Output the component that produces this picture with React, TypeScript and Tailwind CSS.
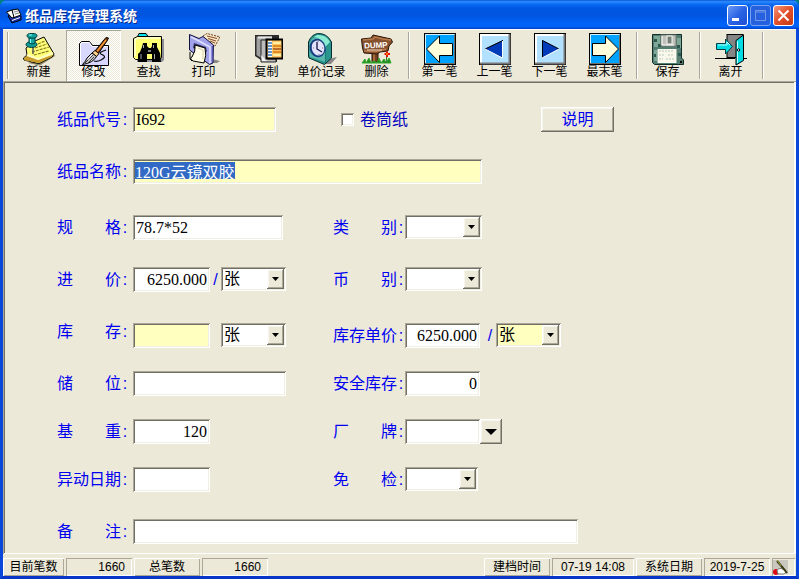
import { useEffect, useRef } from "react";
import type { ReactNode } from "react";

const sunken =
  "shadow-[inset_1px_1px_0_#aca899,inset_-1px_-1px_0_#fff,inset_2px_2px_0_#716f64,inset_-2px_-2px_0_#f1efe2]";
const raised =
  "shadow-[inset_-1px_-1px_0_#716f64,inset_1px_1px_0_#fff,inset_-2px_-2px_0_#aca899,inset_2px_2px_0_#f7f5ec]";
const valueFont =
  "font-['Liberation_Serif','Noto_Sans_CJK_SC',serif] text-[16px] leading-4 text-black";

/* ---------- toolbar drawings, all on a 33 x 33 grid ---------- */

function Icon({ children }: { children: ReactNode }) {
  return (
    <svg viewBox="0 0 33 33" className="h-[33px] w-[33px] shrink-0" aria-hidden="true">
      {children}
    </svg>
  );
}

const NewIcon = () => (
  <Icon>
    <path d="M6 30L18 32.5L33 23L31 20Z" fill="#8a8768" />
    <path d="M13 8L22 4L32 21L30 24L17 30.5L14 30L2 27L1.5 25L5 22L4 15Z" fill="#ffff7a" stroke="#000" strokeWidth="1" />
    <path d="M2 26L5 22L16 27L30 22L29.500 24L17 30L3 27.500Z" fill="#c79a2c" />
    <path d="M5 22L16 26L31 20" fill="none" stroke="#fffcc4" strokeWidth="2" />
    <g stroke="#8c7a1e" strokeWidth="1.200" strokeDasharray="3 1" fill="none">
      <path d="M16 11L23 8" /><path d="M13 15L25 11" /><path d="M10 19L27 14" /><path d="M12 22L27 18" />
    </g>
    <path d="M11 14V21" stroke="#555" strokeWidth="1.500" />
    <ellipse cx="9.500" cy="11.500" rx="5.500" ry="3" fill="#0d9a97" stroke="#003b3b" />
    <path d="M7 4H13V10Q10 12 7 10Z" fill="#15a8a3" stroke="#014645" />
    <ellipse cx="10" cy="2.800" rx="5" ry="2.400" fill="#10a39e" stroke="#003b3b" />
    <path d="M7 2H10M8.500 6V10" stroke="#8ff" strokeWidth="1" />
  </Icon>
);

const EditIcon = () => (
  <Icon>
    <path d="M2.500 32.500V10.500L4.500 8.500H12.500L15.500 12.500H31.500V32.500Z" fill="#d8d8ff" stroke="#000" />
    <path d="M3.500 31.500V11L5 9.500H12L15 13.500H31" fill="none" stroke="#fff" />
    <path d="M29 17L24 19Q22 21 26 22Q30 24 24 27Q20 29 17 28" fill="none" stroke="#111" strokeWidth="1.300" />
    <path d="M18 18L29 4.500L31.500 5L30 8L21 21Z" fill="#7a3a0c" stroke="#000" />
    <path d="M20 18.500L29 7" stroke="#ff9d35" strokeWidth="1.400" />
    <path d="M15 20L18 17.500L22 20.500L19.500 23.500Z" fill="#ffd08a" stroke="#000" />
    <path d="M15 20L19.500 23.500Q16 30 5.500 31.500Q9 28 10 25Z" fill="#c8c8c8" stroke="#000" />
    <path d="M8 30L16 22M11 30L17 24" stroke="#333" />
    <path d="M10.500 27L15 21.500" stroke="#fff" />
  </Icon>
);

const FindIcon = () => (
  <Icon>
    <path d="M5 6H32V27L30 29H5Z" fill="#8c8c94" />
    <path d="M1.500 24.500V5.500L5.500 3.500H29.500V24.500L27.500 26.500H3.500Z" fill="#ffff72" stroke="#000" />
    <path d="M5.500 3.500L7 0.500H14L16 3.500Z" fill="#00e5ee" stroke="#000" />
    <path d="M3 23V6.500L6 5H28" fill="none" stroke="#fffdd6" strokeWidth="1.500" />
    <path d="M11 10H15V13L17 15H19L20 13V10H25V14L28 20L29 29H20V21H15V29H6V21L8 19L10 14Z" fill="#000" />
    <path d="M11.500 12V15M9 21V26M21.500 12V15M22.500 21V26" fill="none" stroke="#a8a8b0" strokeWidth="1" />
    <path d="M16 18H19" stroke="#fff" />
  </Icon>
);

const PrintIcon = () => (
  <Icon>
    <path d="M25 26L33 28L30 30H20Z" fill="#888" />
    <path d="M16 3L20 0.500L33 4L28 13L23 12Z" fill="#f8e7c8" stroke="#6d3d1a" strokeDasharray="2 1" />
    <path d="M20 3L30 5.500M21 5.500L29 8M23 8L28 10" stroke="#824a22" />
    <path d="M2.500 1.500L12 5.500L16 3.500L26.500 12L26 30L22.500 31.500L15 26L2.500 17Z" fill="#a2a2ea" stroke="#11113e" />
    <path d="M4 4L12 8L23 14V30" fill="none" stroke="#e0e0ff" strokeWidth="1.500" />
    <path d="M25.500 13V29" stroke="#5454b0" strokeWidth="1.500" />
    <path d="M7 10L19 14L20 19L6 15Z" fill="#343468" />
    <path d="M8 12L18 15Q20 22 17 30L6 28Q2 25 5 24Q9 18 8 12Z" fill="#fffde5" stroke="#000" />
    <path d="M3 19V26L5 28" fill="none" stroke="#000" />
    <path d="M11 15L16 17V26" fill="none" stroke="#d8cfac" />
  </Icon>
);

const CopyIcon = () => (
  <Icon>
    <path d="M5 2H29V6H27V29H14L5 23Z" fill="#292929" />
    <path d="M6.500 3.500H22V25H14V27L6.500 22Z" fill="#9f9f9f" />
    <path d="M8 4.500H21V22" fill="none" stroke="#e5e5e5" strokeWidth="2" />
    <path d="M11 7V29H26V26H18V7Z" fill="#bcbcbc" stroke="#292929" />
    <path d="M11 22L17 28H12Z" fill="#f4f4f4" />
    <rect x="16.500" y="6.500" width="16" height="19" fill="#ffc565" stroke="#000" strokeWidth="2" />
    <rect x="18" y="8" width="4" height="16" fill="#fff" />
    <path d="M18 10H22M18 13H22M18 16H22M18 19H22M18 22H22" stroke="#3272bd" strokeWidth="1.500" />
    <path d="M23 10H31M23 22H31" stroke="#fff0a4" strokeWidth="2" />
    <path d="M23 13H31M23 19H31" stroke="#e18c22" strokeWidth="2" />
    <path d="M23 16H31" stroke="#a24d13" strokeWidth="1.500" />
  </Icon>
);

const ClockIcon = () => (
  <Icon>
    <path d="M23 26L32 24L26 31H19Z" fill="#888" />
    <path d="M3.500 23V9Q6 2 12.500 0.500Q22 0 26.500 9V25L19.500 31.500L4 25Z" fill="#29958d" stroke="#032f32" />
    <path d="M12 2Q21 1 25 9L20 14Q17 6 9 4Z" fill="#8aebd1" />
    <path d="M20 14V30" stroke="#126a68" />
    <path d="M4.500 22V10Q8 2 13 5Q20 8 20 17V29L5 24Z" fill="#56b7aa" />
    <ellipse cx="12.500" cy="15" rx="8" ry="9.200" fill="#173f84" transform="rotate(-14 12.500 15)" />
    <ellipse cx="13" cy="15" rx="6.300" ry="7.600" fill="#e4e4ff" transform="rotate(-14 13 15)" />
    <path d="M12 9V16L17 19" fill="none" stroke="#121245" strokeWidth="1.300" />
    <path d="M13 8V9M18 15H17M14 22V21M8 15H9" stroke="#777" />
  </Icon>
);

const DumpIcon = () => (
  <Icon>
    <path d="M12 18H18V29H12Z" fill="#754223" stroke="#2a1304" />
    <path d="M14 19V29" stroke="#bb7845" strokeWidth="1.500" />
    <path d="M1.500 6L11 5L13 2L22 4L31 6L32.500 9L29 13L28 18L20 19L17 21L4 20L2.500 15Z" fill="#85512e" stroke="#2b1407" />
    <path d="M3 7L13 6L15 4L23 6L31 7M4 18L17 18.500L26 16" fill="none" stroke="#b77b4d" strokeWidth="1.400" />
    <text x="4" y="15" fill="#fff" fontSize="8" fontWeight="bold" fontFamily="Liberation Sans" transform="rotate(-3 16 12)">DUMP</text>
    <path d="M7 17H22" stroke="#f0d9c4" />
    <path d="M2 30L5 26L6 30L9 25L11 30L14 28L17 30L19 25L21 30L24 26L26 30L29 25L31 30Z" fill="#218b1e" stroke="#33a72c" />
    <path d="M26 30L27 21" stroke="#197417" />
    <path d="M27 18.500V24M24.500 21H30" stroke="#e60c0c" strokeWidth="2" />
    <circle cx="27" cy="21" r="1" fill="#ffa000" />
  </Icon>
);

const EndArrow = ({ right = false }: { right?: boolean }) => (
  <Icon>
    <rect x="1.500" y="0.500" width="31" height="31" fill="#00a2ff" stroke="#000" />
    <path d="M2.500 30.500V1.500H31.500" fill="none" stroke="#d7f1ff" />
    <path d="M2 30.500H31.500V2" fill="none" stroke="#716f64" />
    <path
      d={right ? "M30.500 16L17.500 3V10.500H4.500V22.500H17.500V29.500Z" : "M3.500 16L16.500 3V10.500H29.500V22.500H16.500V29.500Z"}
      fill="#ffffdc"
      stroke="#000"
    />
  </Icon>
);

const StepArrow = ({ right = false }: { right?: boolean }) => (
  <Icon>
    <rect x="1.500" y="0.500" width="31" height="31" fill="#b2e1ff" stroke="#000" />
    <path d="M3 30V2H31" fill="none" stroke="#fff" strokeWidth="2" />
    <path d="M2 30.500H31.500V1" fill="none" stroke="#777" strokeWidth="2" />
    <path d={right ? "M9 7L26 16L9 25Z" : "M25 7L7 16L25 25Z"} fill="#003cb9" />
    <path d={right ? "M9.500 25V7.500L26 16" : "M25 7.500L7 16"} fill="none" stroke="#000" />
    <path d={right ? "M9 25L26 16" : "M7 16L24.500 25V8"} fill="none" stroke="#fff" />
  </Icon>
);

const SaveIcon = () => (
  <Icon>
    <path d="M1.500 1.500H30.500V25L32.500 27V31.500H3.500L1.500 29.500Z" fill="#527d70" stroke="#102d28" />
    <path d="M3 3H9V14H3ZM26 5H30V15H26ZM3 17H6V28H3Z" fill="#7fa797" />
    <path d="M3 6H6V9H3ZM26 12H29V15H26ZM3 21H5V24H3ZM27 20H30V23H27ZM7 11H10V14H7Z" fill="#2d5850" />
    <rect x="10" y="2" width="15" height="11" fill="#c1c1bb" stroke="#707b72" />
    <rect x="16" y="3" width="5" height="8" fill="#777e77" stroke="#f9f9f4" />
    <path d="M11 3V12H23" fill="none" stroke="#fff" />
    <rect x="6.500" y="16" width="19" height="14" fill="#f8f8ed" />
    <path d="M8 18H23M8 22H14M17 22H23M8 26H12M15 26H23" stroke="#b9c5b7" strokeDasharray="2 1" />
    <path d="M29 28H31V30H29Z" fill="#000" />
  </Icon>
);

const ExitIcon = () => (
  <Icon>
    <path d="M1 25.500H21M30 25.500H33" stroke="#000" />
    <rect x="13" y="1.500" width="16" height="23" fill="#858585" stroke="#000" />
    <path d="M22 7.500L29.500 2V27.500L22 32Z" fill="#00dce2" stroke="#000" />
    <path d="M23.500 8V30" stroke="#baffff" />
    <circle cx="24.500" cy="17" r="1.200" fill="#fff" stroke="#000" />
    <path d="M2.500 10.500H11.500V6L18.500 13.500L11.500 21V16.500H2.500Z" fill="#00dce2" stroke="#003d46" />
    <path d="M4 12H13V9L16 12" fill="none" stroke="#b5ffff" />
  </Icon>
);

/* ---------- building blocks ---------- */

function ToolButton({ label, icon, active = false }: { label: string; icon: ReactNode; active?: boolean }) {
  return (
    <button
      type="button"
      className={`flex h-[51px] w-[55px] flex-col items-center pt-[3px] text-[12px] leading-3 whitespace-nowrap text-black ${
        active
          ? "bg-[repeating-conic-gradient(#fff_0_25%,#ece9d8_0_50%)] bg-[length:2px_2px] shadow-[inset_1px_1px_0_#aca899,inset_-1px_-1px_0_#fff]"
          : ""
      }`}
    >
      {icon}
      <span>{label}</span>
    </button>
  );
}

const Separator = () => (
  <div className="flex w-2 justify-end py-0.5 pr-0.5">
    <div className="w-0.5 border-l border-[#aca899] bg-white" />
  </div>
);

function Label({ id, text, top = false }: { id: string; text: string; top?: boolean }) {
  return (
    <label
      htmlFor={id}
      className={`flex w-[72px] shrink-0 text-[16px] whitespace-pre text-[#0000f0] ${top ? "leading-[17px]" : "leading-[25px]"}`}
    >
      <span className="w-16">{text}</span>
      <span className="w-2 text-center">:</span>
    </label>
  );
}

function Field({
  id, width, value = "", yellow = false, right = false,
}: { id: string; width: string; value?: string; yellow?: boolean; right?: boolean }) {
  return (
    <input
      id={id}
      defaultValue={value}
      className={`h-[25px] shrink-0 px-[3px] outline-none ${sunken} ${valueFont} ${width} ${yellow ? "bg-[#ffffc0]" : "bg-white"} ${right ? "text-right" : ""}`}
    />
  );
}

function Combo({
  id, width, value = "", yellow = false, name,
}: { id: string; width: string; value?: string; yellow?: boolean; name?: string }) {
  return (
    <div className={`relative h-6 shrink-0 ${width}`}>
      <select
        id={id}
        aria-label={name}
        defaultValue={value}
        className={`h-6 w-full appearance-none pr-5 pl-[3px] outline-none ${sunken} ${valueFont} ${yellow ? "bg-[#ffffc0]" : "bg-white"}`}
      >
        <option>{value}</option>
      </select>
      <span
        className={`pointer-events-none absolute top-0.5 right-0.5 flex h-5 w-[17px] items-center justify-center bg-[#ece9d8] ${raised}`}
      >
        <svg viewBox="0 0 7 4" className="h-1 w-[7px]" aria-hidden="true">
          <path d="M0 0H7L3.500 4Z" />
        </svg>
      </span>
    </div>
  );
}

function Row({ gap, left, right }: { gap: string; left: ReactNode; right?: ReactNode }) {
  return (
    <div className={`flex h-[25px] items-start ${gap}`}>
      <div className="flex w-[276px] shrink-0 items-start gap-1">{left}</div>
      {right}
    </div>
  );
}

function StatusCell({ text, width, up = false, end = false }: { text: string; width: string; up?: boolean; end?: boolean }) {
  return (
    <div
      className={`h-[18px] shrink-0 text-[12px] leading-[18px] whitespace-nowrap text-black ${width} ${
        up
          ? "shadow-[inset_1px_1px_0_#fff,inset_-1px_-1px_0_#aca899]"
          : "shadow-[inset_1px_1px_0_#aca899,inset_-1px_-1px_0_#fff]"
      } ${end ? "pr-[7px] text-right" : "text-center"}`}
    >
      {text}
    </div>
  );
}

const captionButton = "flex h-[21px] w-[21px] items-center justify-center rounded-[3px] border";

export default function App() {
  const nameRef = useRef<HTMLInputElement>(null);

  useEffect(() => {
    nameRef.current?.focus();
    nameRef.current?.select();
  }, []);

  return (
    <div className="bg-[#00807c] font-['Liberation_Sans','Noto_Sans_CJK_SC',sans-serif]">
      <div className="flex min-h-screen flex-col overflow-hidden rounded-t-[7px] bg-[#0046e0]">
        <header className="flex h-[29px] shrink-0 items-center bg-[linear-gradient(#0a56d4_0%,#2d8cff_6%,#0b6cf5_14%,#0058e2_28%,#0054e0_52%,#0063fa_82%,#0060f5_92%,#0040c4_100%)] pt-0.5 pr-[5px] pl-1.5">
          <svg viewBox="0 0 16 16" className="h-4 w-4" aria-hidden="true">
            <path d="M2 8L6 15L15 12V8L8 5Z" fill="#1a2c9c" stroke="#000" />
            <path d="M0.500 4L6 2L9 9L6 10Z" fill="#fff" stroke="#000" />
            <path d="M6 2L12 1L15 7L8 9.500Z" fill="#f6f6f6" stroke="#000" />
            <path d="M6 12.500L14 9.500" stroke="#fff" fill="none" />
            <path d="M8 4L12 3M9 6L13 5" stroke="#888" />
          </svg>
          <h1 className="ml-[3px] grow text-[14px] leading-4 font-bold text-white [text-shadow:1px_1px_0_#0a2a8c]">
            纸品库存管理系统
          </h1>
          <div className="flex gap-0.5">
            <button type="button" aria-label="最小化" className={`${captionButton} border-white bg-[linear-gradient(135deg,#6c9cf8,#2a63e4_50%,#1d4fd4)]`}>
              <svg viewBox="0 0 19 19" className="h-[19px] w-[19px]"><path d="M4 12H11V15H4Z" fill="#fff" /></svg>
            </button>
            <button type="button" aria-label="最大化" disabled className={`${captionButton} border-[#7ba0ee] bg-[#2560df]`}>
              <svg viewBox="0 0 19 19" className="h-[19px] w-[19px]"><path d="M4.500 4.500H14.500V14.500H4.500ZM4 6H15" fill="none" stroke="#7497e6" /></svg>
            </button>
            <button type="button" aria-label="关闭" className={`${captionButton} border-white bg-[linear-gradient(135deg,#f0977c,#e2502a_50%,#c43a14)]`}>
              <svg viewBox="0 0 19 19" className="h-[19px] w-[19px]"><path d="M4.500 4.500L14.500 14.500M14.500 4.500L4.500 14.500" fill="none" stroke="#fff" strokeWidth="2" /></svg>
            </button>
          </div>
        </header>

        <div className="flex grow flex-col border-x-[3px] border-b-[3px] border-[#0a48dc] border-b-[#0a36c8] bg-[#ece9d8]">
          <nav aria-label="工具栏" className="flex h-[52px] shrink-0 border-t border-white">
            <Separator />
            <ToolButton label="新建" icon={<NewIcon />} />
            <ToolButton label="修改" icon={<EditIcon />} active />
            <ToolButton label="查找" icon={<FindIcon />} />
            <ToolButton label="打印" icon={<PrintIcon />} />
            <Separator />
            <ToolButton label="复制" icon={<CopyIcon />} />
            <ToolButton label="单价记录" icon={<ClockIcon />} />
            <ToolButton label="删除" icon={<DumpIcon />} />
            <Separator />
            <ToolButton label="第一笔" icon={<EndArrow />} />
            <ToolButton label="上一笔" icon={<StepArrow />} />
            <ToolButton label="下一笔" icon={<StepArrow right />} />
            <ToolButton label="最末笔" icon={<EndArrow right />} />
            <Separator />
            <ToolButton label="保存" icon={<SaveIcon />} />
            <Separator />
            <ToolButton label="离开" icon={<ExitIcon />} />
            <Separator />
          </nav>

          <main className="grow pt-[26px] pb-2.5 pl-[54px] shadow-[inset_1px_1px_0_#aca899,inset_0_-1px_0_#fff,inset_-2px_0_0_#fff,inset_2px_2px_0_#716f64]">
            <form>
              <Row
                gap=""
                left={<><Label id="code" text="纸品代号" /><Field id="code" width="w-[143px]" value="I692" yellow /></>}
                right={
                  <>
                    <label className="flex h-[25px] w-[208px] items-center gap-[6px] pl-2 text-[16px] text-[#0000c0]">
                      <input type="checkbox" className={`h-[13px] w-[13px] appearance-none bg-white ${sunken}`} />
                      卷筒纸
                    </label>
                    <button type="button" className={`h-[25px] w-[73px] text-[16px] leading-[25px] text-[#0000f0] ${raised}`}>
                      说明
                    </button>
                  </>
                }
              />
              <div className="mt-[27px] flex gap-1">
                <Label id="name" text="纸品名称" />
                <div className={`flex h-[25px] w-[349px] bg-[#ffffc0] px-0.5 py-[3px] ${sunken}`}>
                  <input
                    id="name"
                    ref={nameRef}
                    defaultValue="120G云镜双胶"
                    className={`h-[17px] w-full bg-transparent outline-none selection:bg-[#316ac5] selection:text-white ${valueFont}`}
                  />
                </div>
              </div>
              <Row
                gap="mt-[31px]"
                left={<><Label id="spec" text={"规\u3000\u3000格"} /><Field id="spec" width="w-[150px]" value="78.7*52" /></>}
                right={<><Label id="kind" text={"类\u3000\u3000别"} /><Combo id="kind" width="w-[77px]" /></>}
              />
              <Row
                gap="mt-[27px]"
                left={
                  <>
                    <Label id="price" text={"进\u3000\u3000价"} />
                    <div className="flex">
                      <Field id="price" width="w-[77px]" value="6250.000" right />
                      <span className="w-[11px] text-center text-[16px] leading-[25px] text-[#0000f0]">/</span>
                      <Combo id="price-unit" name="进价单位" width="w-[65px]" value="张" />
                    </div>
                  </>
                }
                right={<><Label id="currency" text={"币\u3000\u3000别"} /><Combo id="currency" width="w-[77px]" /></>}
              />
              <Row
                gap="mt-[31px]"
                left={
                  <>
                    <Label id="stock" text={"库\u3000\u3000存"} top />
                    <div className="flex gap-[11px]">
                      <Field id="stock" width="w-[77px]" yellow />
                      <Combo id="stock-unit" name="库存单位" width="w-[65px]" value="张" />
                    </div>
                  </>
                }
                right={
                  <>
                    <Label id="stock-price" text="库存单价" />
                    <Field id="stock-price" width="w-[75px]" value="6250.000" right />
                    <span className="w-4 pl-1 text-center text-[16px] leading-[25px] text-[#0000f0]">/</span>
                    <Combo id="stock-price-unit" name="库存单价单位" width="w-[65px]" value="张" yellow />
                  </>
                }
              />
              <Row
                gap="mt-[23px]"
                left={<><Label id="bin" text={"储\u3000\u3000位"} /><Field id="bin" width="w-[153px]" /></>}
                right={<><Label id="safe" text="安全库存" /><Field id="safe" width="w-[75px]" value="0" right /></>}
              />
              <Row
                gap="mt-[23px]"
                left={<><Label id="weight" text={"基\u3000\u3000重"} /><Field id="weight" width="w-[77px]" value="120" right /></>}
                right={
                  <>
                    <Label id="brand" text={"厂\u3000\u3000牌"} />
                    <Field id="brand" width="w-[75px]" />
                    <button type="button" aria-label="选择厂牌" className={`flex h-[25px] w-[22px] items-center justify-center ${raised}`}>
                      <svg viewBox="0 0 12 6" className="h-1.5 w-3"><path d="M0 0H12L6 6Z" /></svg>
                    </button>
                  </>
                }
              />
              <Row
                gap="mt-[23px]"
                left={<><Label id="moved" text="异动日期" /><Field id="moved" width="w-[77px]" /></>}
                right={<><Label id="exempt" text={"免\u3000\u3000检"} /><Combo id="exempt" width="w-[73px]" /></>}
              />
              <div className="mt-[27px] flex gap-1">
                <Label id="remark" text={"备\u3000\u3000注"} />
                <Field id="remark" width="w-[445px]" />
              </div>
            </form>
          </main>

          <footer className="flex h-[22px] shrink-0 gap-0.5 pt-1 pr-px">
            <StatusCell text="目前笔数" width="w-[61px]" up />
            <StatusCell text="1660" width="w-[66px]" end />
            <StatusCell text="总笔数" width="w-[66px]" up />
            <StatusCell text="1660" width="w-[66px]" end />
            <div className="grow" />
            <StatusCell text="建档时间" width="w-[66px]" up />
            <StatusCell text="07-19 14:08" width="w-[82px]" />
            <StatusCell text="系统日期" width="w-[66px]" up />
            <StatusCell text="2019-7-25" width="w-[66px]" />
            <div className="h-[18px] w-[23px] shadow-[inset_1px_1px_0_#aca899,inset_-1px_-1px_0_#fff]">
              <svg viewBox="0 0 18 18" className="h-[18px] w-[18px]" aria-hidden="true">
                <path d="M1 2H16V16H1Z" fill="#c9c7c0" />
                <circle cx="4" cy="14" r="3" fill="#e00b12" />
                <path d="M5 12Q9 8 14 14L12 16H6Z" fill="#fff" stroke="#777" />
                <path d="M5 3L11 10L15 15" stroke="#3a3a14" strokeWidth="2" />
                <path d="M5 2L9 8" stroke="#9b9b35" />
              </svg>
            </div>
          </footer>
        </div>
      </div>
    </div>
  );
}
